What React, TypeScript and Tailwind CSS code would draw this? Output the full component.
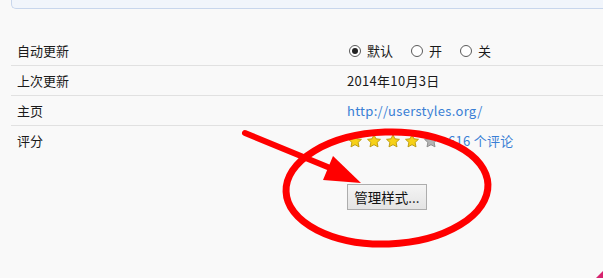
import React from 'react';

const font = { fontFamily: '"Noto Sans CJK SC", "Noto Sans", sans-serif' };

const Radio = ({ checked, label }: { checked?: boolean; label: string }) => (
  <label className="flex items-center gap-[6px] mr-[18px]">
    <span className="w-[12px] h-[12px] rounded-full border border-[#5a5a5a] bg-white flex items-center justify-center">
      {checked && <span className="w-[6px] h-[6px] rounded-full bg-[#222]" />}
    </span>
    <span>{label}</span>
  </label>
);

const Star = ({ on }: { on: boolean }) => (
  <svg width="16" height="16" viewBox="0 0 24 24" className="mr-[3px]">
    <path
      d="M12 2.5l2.9 6.2 6.8.8-5 4.6 1.3 6.7L12 17.5l-6 3.3 1.3-6.7-5-4.6 6.8-.8z"
      fill={on ? '#f7d117' : '#b4b4b4'}
      stroke={on ? '#b99a10' : '#8a8a8a'}
      strokeWidth="1.4"
      strokeLinejoin="round"
    />
  </svg>
);

const Row = ({ label, children, last }: { label: string; children: React.ReactNode; last?: boolean }) => (
  <div className={`flex items-center h-[30px] ${last ? '' : 'border-b border-[#e1e1e1]'}`}>
    <div className="w-[336px] pl-[6px] text-[#1a1a1a]">{label}</div>
    <div className="flex items-center text-[#1a1a1a]">{children}</div>
  </div>
);

export default function App() {
  return (
    <div className="relative w-[603px] h-[278px] bg-[#f9f9f9] overflow-hidden text-[13px]" style={font}>
      <div className="ml-[11px] h-[9px] bg-[#f1f5fb] border-l border-b border-[#c8d6ec] rounded-bl-[5px]" />

      <div className="ml-[11px] mt-[27px]">
        <Row label="自动更新">
          <div className="flex items-center pl-[2px]">
            <Radio checked label="默认" />
            <Radio label="开" />
            <Radio label="关" />
          </div>
        </Row>
        <Row label="上次更新">
          <span className="tracking-[0.3px]">2014年10月3日</span>
        </Row>
        <Row label="主页">
          <span className="text-[#3a7fd5] tracking-[0.3px]">http://userstyles.org/</span>
        </Row>
        <Row label="评分" last>
          <div className="flex items-center">
            <Star on />
            <Star on />
            <Star on />
            <Star on />
            <Star on={false} />
          </div>
          <span className="ml-[6px] text-[#3a7fd5] tracking-[0.3px]">616 个评论</span>
        </Row>
      </div>

      <div className="ml-[347px] mt-[28px]">
        <button className="w-[80px] h-[26px] border border-[#adadad] bg-gradient-to-b from-[#f4f4f4] to-[#e4e4e4] text-[#111] text-[13.5px]">
          管理样式...
        </button>
      </div>

      {/* red annotation drawn over the page */}
      <svg className="absolute inset-0 pointer-events-none" width="603" height="278" viewBox="0 0 603 278">
        <ellipse cx="387" cy="188" rx="101" ry="56" fill="none" stroke="#ff0000" strokeWidth="7" transform="rotate(-2 387 188)" />
        <line x1="245" y1="133" x2="335" y2="170" stroke="#ff0000" strokeWidth="6" strokeLinecap="round" />
        <polygon points="333,156 323,180 361,183" fill="#ff0000" />
        <polygon points="596,278 603,271 603,278" fill="#d6246e" />
      </svg>
    </div>
  );
}
